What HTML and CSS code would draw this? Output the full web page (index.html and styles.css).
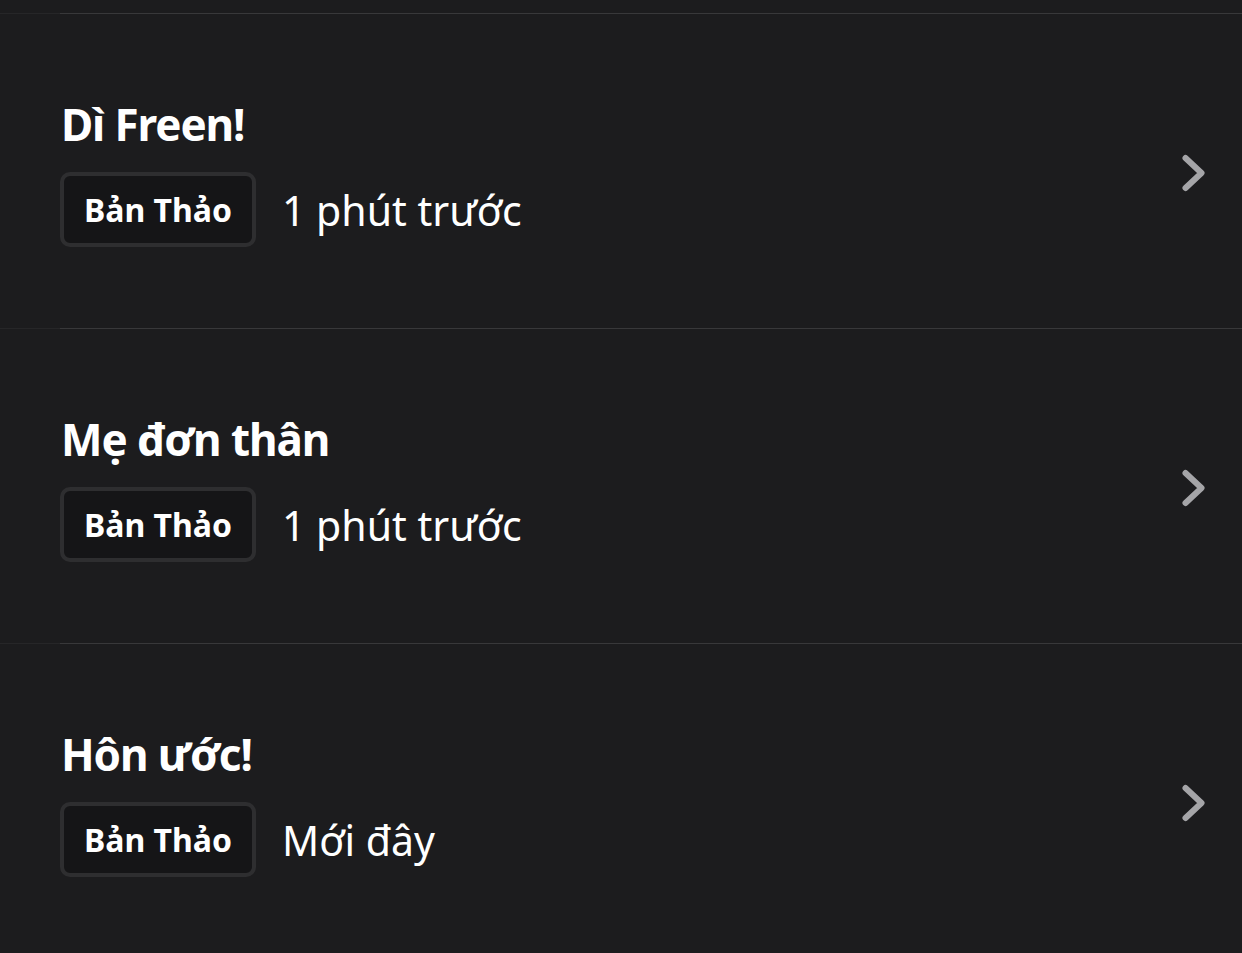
FILE: index.html
```html
<!DOCTYPE html>
<html lang="vi">
<head>
<meta charset="utf-8">
<title>Bản thảo</title>
<link rel="stylesheet" href="styles.css">
</head>
<body>
<ul class="list">
  <li class="row">
    <div class="row-inner">
      <div class="info">
        <div class="title">Dì Freen!</div>
        <div class="meta">
          <span class="badge">Bản Thảo</span>
          <span class="time">1 phút trước</span>
        </div>
      </div>
      <svg class="chev" width="26" height="40" viewBox="0 0 26 40"><path d="M4.5 5 L20.5 20 L4.5 35" fill="none" stroke="#a5a5a8" stroke-width="6" stroke-linecap="round" stroke-linejoin="round"/></svg>
    </div>
  </li>
  <li class="row">
    <div class="row-inner">
      <div class="info">
        <div class="title">Mẹ đơn thân</div>
        <div class="meta">
          <span class="badge">Bản Thảo</span>
          <span class="time">1 phút trước</span>
        </div>
      </div>
      <svg class="chev" width="26" height="40" viewBox="0 0 26 40"><path d="M4.5 5 L20.5 20 L4.5 35" fill="none" stroke="#a5a5a8" stroke-width="6" stroke-linecap="round" stroke-linejoin="round"/></svg>
    </div>
  </li>
  <li class="row">
    <div class="row-inner">
      <div class="info">
        <div class="title">Hôn ước!</div>
        <div class="meta">
          <span class="badge">Bản Thảo</span>
          <span class="time">Mới đây</span>
        </div>
      </div>
      <svg class="chev" width="26" height="40" viewBox="0 0 26 40"><path d="M4.5 5 L20.5 20 L4.5 35" fill="none" stroke="#a5a5a8" stroke-width="6" stroke-linecap="round" stroke-linejoin="round"/></svg>
    </div>
  </li>
</ul>
</body>
</html>
```
FILE: styles.css
```css
html, body {
  margin: 0;
  padding: 0;
  background: #1c1c1e;
  height: 100%;
  overflow: hidden;
}
body {
  font-family: "Noto Sans", "Open Sans", sans-serif;
  color: #ffffff;
}
.list {
  list-style: none;
  margin: 0;
  padding: 13px 0 0 0;
}
.row {
  padding-left: 60px;
  box-shadow: inset 0 1px 0 #262628;
}
.row-inner {
  height: 311px;
  border-top: 1px solid #38383a;
  display: flex;
  align-items: center;
  justify-content: space-between;
  padding-right: 35px;
  padding-top: 3px;
  box-sizing: content-box;
}
.info {
  display: flex;
  flex-direction: column;
}
.title {
  font-size: 44px;
  font-weight: 700;
  line-height: 53px;
  letter-spacing: -1.1px;
  margin-left: 1px;
}
.meta {
  display: flex;
  align-items: center;
  margin-top: 21px;
}
.badge {
  display: inline-flex;
  align-items: center;
  justify-content: center;
  box-sizing: border-box;
  height: 75px;
  width: 196px;
  border: 4px solid #2e2e30;
  border-radius: 10px;
  background: #151517;
  font-size: 32px;
  font-weight: 700;
  letter-spacing: 0;
}
.time {
  margin-left: 26px;
  font-size: 41px;
  font-weight: 400;
  letter-spacing: 0;
  color: #ffffff;
}
.chev {
  display: block;
  margin-top: 0;
}
```
